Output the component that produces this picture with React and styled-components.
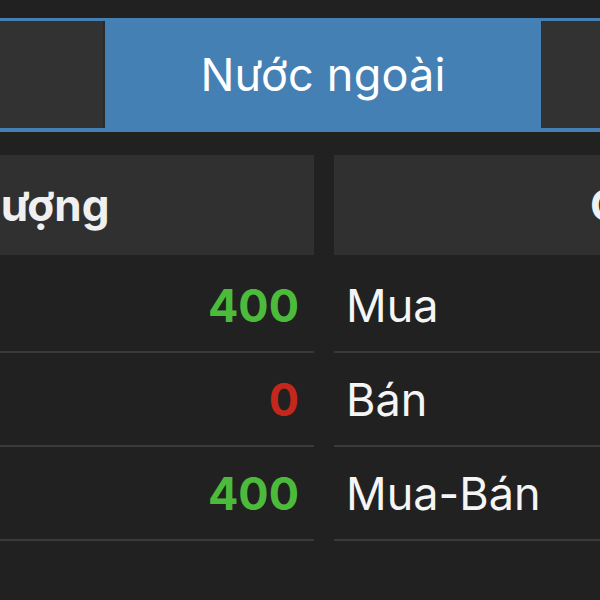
import { Fragment } from "react";
import styled, { createGlobalStyle } from "styled-components";

const GlobalStyle = createGlobalStyle`
  html, body {
    margin: 0;
    padding: 0;
    background: #212121;
    overflow: hidden;
  }
  #root {
    width: 600px;
    height: 600px;
    overflow: hidden;
  }
`;

const Screen = styled.div`
  width: 600px;
  height: 600px;
  overflow: hidden;
  background: #212121;
  font-family: Inter, "Noto Sans", sans-serif;
  color: #f2f2f2;
  padding-top: 18px;
  box-sizing: border-box;
`;

const TabBar = styled.div`
  display: grid;
  grid-template-columns: 434px 434px 434px;
  column-gap: 1px;
  width: max-content;
  margin-left: -332px;
  padding: 3px 3px 4px;
  background: #4580b5;
`;

const Tab = styled.div`
  height: 107px;
  display: flex;
  align-items: center;
  justify-content: center;
  font-size: 45px;
  font-weight: 400;
  letter-spacing: 0.2px;
  background: ${(p) => (p.$active ? "#4580b5" : "#323232")};
  box-shadow: ${(p) => (p.$active ? "none" : "inset -2px 0 0 #2a2a2a")};
  color: #ffffff;
`;

const Table = styled.div`
  display: grid;
  grid-template-columns: 632px 632px;
  column-gap: 20px;
  width: max-content;
  margin-left: -318px;
  margin-top: 23px;
`;

const HeadCell = styled.div`
  height: 100px;
  margin-bottom: 4px;
  display: flex;
  align-items: center;
  justify-content: center;
  padding-left: ${(p) => p.$shift || 0}px;
  padding-right: ${(p) => p.$pull || 0}px;
  background: #303030;
  font-size: 44px;
  font-weight: 700;
  color: #f0f0f0;
`;

const Cell = styled.div`
  height: 92px;
  display: flex;
  align-items: center;
  justify-content: ${(p) => (p.$right ? "flex-end" : "flex-start")};
  padding: 0 15px 0 12px;
  border-bottom: 2px solid #3a3a3a;
  font-size: 45px;
  font-weight: ${(p) => (p.$bold ? 700 : 400)};
  color: ${(p) => p.$color || "#f5f5f5"};
`;

const GREEN = "#4cba3a";
const RED = "#c4281c";

const rows = [
  { value: "400", color: GREEN, label: "Mua" },
  { value: "0", color: RED, label: "Bán" },
  { value: "400", color: GREEN, label: "Mua-Bán" },
];

export default function App() {
  return (
    <Screen>
      <GlobalStyle />
      <TabBar>
        <Tab>Tất cả</Tab>
        <Tab $active>Nước ngoài</Tab>
        <Tab>Tự doanh</Tab>
      </TabBar>
      <Table>
        <HeadCell $pull={6}>Khối lượng</HeadCell>
        <HeadCell $shift={44}>Chỉ tiêu</HeadCell>
        {rows.map((r) => (
          <Fragment key={r.label}>
            <Cell $right $bold $color={r.color}>
              {r.value}
            </Cell>
            <Cell>{r.label}</Cell>
          </Fragment>
        ))}
      </Table>
    </Screen>
  );
}
